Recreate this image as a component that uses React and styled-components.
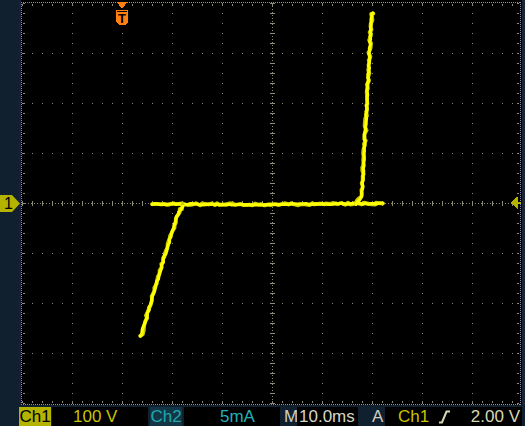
import React from 'react';
import styled, { createGlobalStyle } from 'styled-components';

const GlobalStyle = createGlobalStyle`
  html, body {
    margin: 0;
    padding: 0;
    background: #11202e;
  }
  body {
    font-family: "Liberation Sans", Arial, sans-serif;
  }
`;

const Scope = styled.div`
  width: 525px;
  height: 426px;
  display: flex;
  flex-direction: column;
  background: #11202e;
  overflow: hidden;
`;

const ScreenRow = styled.div`
  display: flex;
  height: 405px;
`;

const LeftRail = styled.div`
  width: 19px;
  border-right: 2px solid #1a1d40;
  padding-top: 195px;
`;

const ChannelMarker = styled.div`
  width: 20px;
  height: 17px;
  background: ${(p) => p.$color};
  clip-path: polygon(0 0, 60% 0, 100% 50%, 60% 100%, 0 100%);
  color: #000;
  font-size: 16px;
  line-height: 17px;
  padding-left: 4px;
  box-sizing: border-box;
`;

const Graticule = styled.svg`
  display: block;
  background: #000;
  shape-rendering: crispEdges;
`;

const RightRail = styled.div`
  width: 3px;
  background: #1a2636;
`;

const StatusBar = styled.div`
  display: flex;
  height: 19px;
  margin-top: 2px;
  padding-left: 19px;
  font-size: 17px;
  line-height: 19px;
  white-space: nowrap;
`;

const ChannelTag = styled.div`
  width: 32px;
  margin-left: ${(p) => p.$gap || 0}px;
  background: ${(p) => p.$bg};
  color: ${(p) => p.$color};
  text-align: center;
`;

const Readout = styled.div`
  display: flex;
  align-items: center;
  width: ${(p) => p.$width}px;
  margin-left: ${(p) => p.$gap || 0}px;
  padding-left: ${(p) => p.$pad || 0}px;
  padding-right: 2px;
  box-sizing: border-box;
  background: #000;
  color: ${(p) => p.$color};
`;

const ModeLabel = styled.div`
  width: ${(p) => p.$width}px;
  padding-left: ${(p) => p.$pad}px;
  box-sizing: border-box;
  color: #cfcfc0;
`;

const Value = styled.span`
  color: ${(p) => p.$color};
  margin-left: ${(p) => (p.$push ? 'auto' : '0')};
`;

const SlopeIcon = styled.svg`
  margin-left: 10px;
`;

function mulberry(seed) {
  let a = seed;
  return () => {
    a |= 0;
    a = (a + 0x6d2b79f5) | 0;
    let t = Math.imul(a ^ (a >>> 15), 1 | a);
    t = (t + Math.imul(t ^ (t >>> 7), 61 | t)) ^ t;
    return ((t ^ (t >>> 14)) >>> 0) / 4294967296;
  };
}

function tracePath(points, amp, seed) {
  const rand = mulberry(seed);
  let d = '';
  for (let s = 0; s < points.length - 1; s++) {
    const [ax, ay] = points[s];
    const [bx, by] = points[s + 1];
    const n = Math.max(1, Math.ceil(Math.hypot(bx - ax, by - ay) / 3));
    for (let i = s === 0 ? 0 : 1; i <= n; i++) {
      const t = i / n;
      const x = ax + (bx - ax) * t + (rand() - 0.5) * amp;
      const y = ay + (by - ay) * t + (rand() - 0.5) * amp;
      d += `${d ? 'L' : 'M'}${x.toFixed(1)} ${y.toFixed(1)} `;
    }
  }
  return d;
}

const segments = [
  [[152, 204], [250, 204.5], [383, 203.5]],
  [[183, 206], [178, 214], [168, 245], [141, 336]],
  [[356, 204], [361, 198], [362.5, 186], [367, 100], [371.5, 16], [373, 13]],
];

const majorX = [72, 122, 172, 222, 322, 372, 422, 472];
const majorY = [53, 103, 153, 253, 303, 353];
const DOT = '#8c8c78';
const EDGE = '#8e8eb4';

function Screen() {
  return (
    <Graticule width="501" height="405" viewBox="21 0 501 405">
      {/* outer border */}
      <g stroke={EDGE} strokeDasharray="1 1">
        <line x1="21.5" y1="2" x2="21.5" y2="405" />
        <line x1="520.5" y1="2" x2="520.5" y2="405" />
        <line x1="21" y1="2.5" x2="521" y2="2.5" />
        <line x1="21" y1="404.5" x2="521" y2="404.5" />
      </g>
      {/* edge ticks */}
      <g stroke={DOT} strokeWidth="2" strokeDasharray="1 9">
        <line x1="24" y1="3" x2="24" y2="404" />
        <line x1="518" y1="3" x2="518" y2="404" />
        <line x1="22" y1="5" x2="521" y2="5" />
        <line x1="22" y1="402" x2="521" y2="402" />
      </g>
      {/* major divisions */}
      <g stroke={DOT} strokeDasharray="1 9">
        {majorX.map((x) => (
          <line key={x} x1={x + 0.5} y1="3" x2={x + 0.5} y2="404" />
        ))}
        {majorY.map((y) => (
          <line key={y} x1="22" y1={y + 0.5} x2="521" y2={y + 0.5} />
        ))}
      </g>
      {/* centre axes */}
      <g stroke={DOT}>
        <line x1="22" y1="203.5" x2="521" y2="203.5" strokeDasharray="1 2" />
        <line x1="22" y1="203.5" x2="521" y2="203.5" strokeWidth="5" strokeDasharray="1 9" />
        <line x1="272.5" y1="3" x2="272.5" y2="404" strokeDasharray="1 2" />
        <line x1="272.5" y1="3" x2="272.5" y2="404" strokeWidth="5" strokeDasharray="1 9" />
      </g>
      {/* trigger position */}
      <polygon points="116.5,2 127.5,2 122,8.5" fill="#ff7f10" />
      <path d="M116 10 H128 V22 L125 25 H119 L116 22 Z" fill="#ff7f10" />
      <rect x="117" y="11" width="10" height="1" fill="#000" />
      <text
        x="122"
        y="23"
        textAnchor="middle"
        fontSize="13"
        fontWeight="bold"
        fontFamily="Liberation Sans, Arial, sans-serif"
        fill="#000"
      >
        T
      </text>
      {/* trigger level */}
      <polygon points="511,202.5 517.5,196.5 517.5,208.5" fill="#b4b400" />
      <rect x="517" y="202" width="4" height="2" fill="#b4b400" />
      {/* trace */}
      <g fill="none" strokeLinecap="round" strokeLinejoin="round" style={{ shapeRendering: 'auto' }}>
        {segments.map((pts, i) => (
          <React.Fragment key={i}>
            <path d={tracePath(pts, 2.4, 11 + i)} stroke="#c8c800" strokeWidth="3.8" />
            <path d={tracePath(pts, 1.2, 31 + i)} stroke="#ffff00" strokeWidth="3.2" />
          </React.Fragment>
        ))}
      </g>
    </Graticule>
  );
}

export default function App() {
  return (
    <Scope>
      <GlobalStyle />
      <ScreenRow>
        <LeftRail>
          <ChannelMarker $color="#b4b400">1</ChannelMarker>
        </LeftRail>
        <Screen />
        <RightRail />
      </ScreenRow>
      <StatusBar>
        <ChannelTag $bg="#b4b400" $color="#000">Ch1</ChannelTag>
        <Readout $width={96} $gap={1} $pad={21} $color="#c8c400">100 V</Readout>
        <ChannelTag $gap={2} $bg="#133646" $color="#22a6ae">Ch2</ChannelTag>
        <Readout $width={96} $gap={2} $pad={36} $color="#22b0b8">5mA</Readout>
        <ModeLabel $width={17} $pad={4}>M</ModeLabel>
        <Readout $width={61} $pad={2} $color="#d6d6c6">10.0ms</Readout>
        <ModeLabel $width={27} $pad={14}>A</ModeLabel>
        <Readout $width={137} $pad={13} $color="#c8c400">
          <Value $color="#c8c400">Ch1</Value>
          <SlopeIcon width="11" height="14" viewBox="0 0 11 14">
            <path d="M0 12.5 H3 L7.5 1.5 H11" fill="none" stroke="#d8d8b0" strokeWidth="2" />
          </SlopeIcon>
          <Value $push $color="#d8d8b0">2.00 V</Value>
        </Readout>
      </StatusBar>
    </Scope>
  );
}
